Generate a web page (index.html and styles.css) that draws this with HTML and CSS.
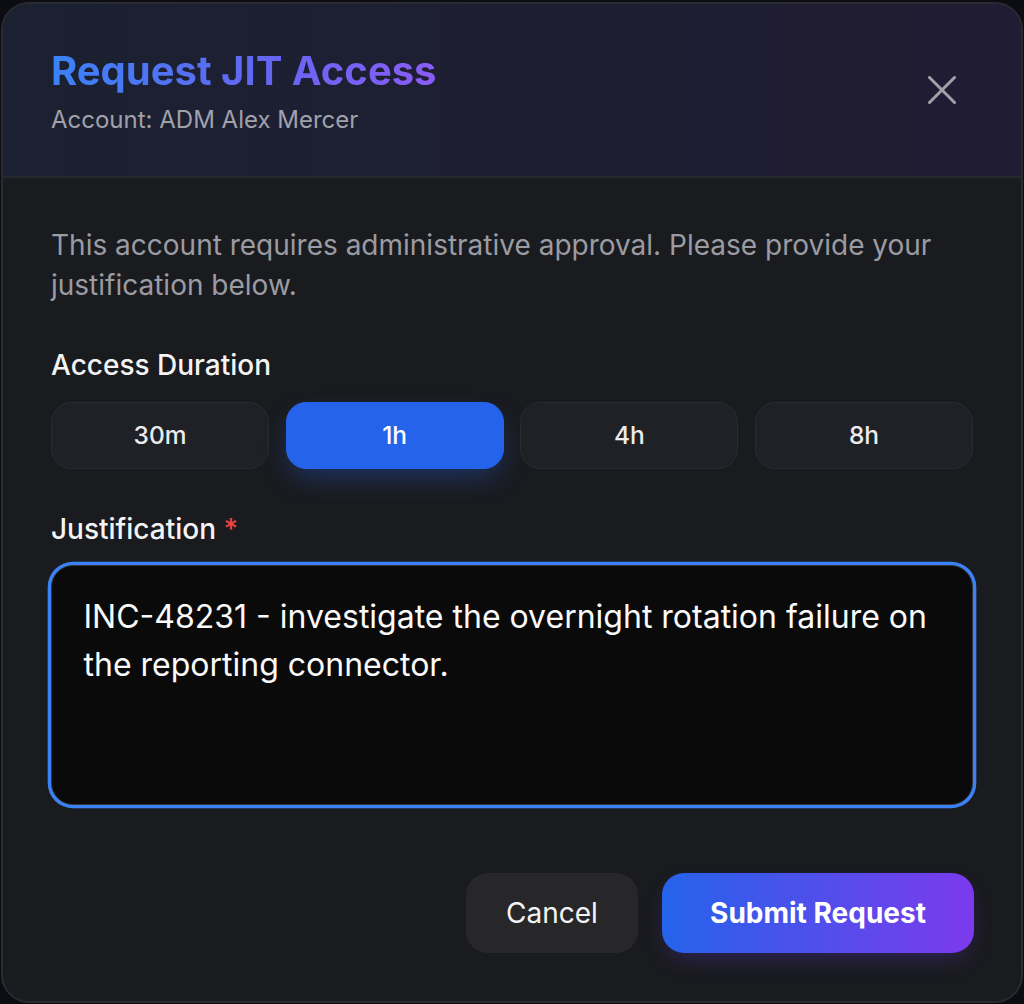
FILE: index.html
```html
<!DOCTYPE html>
<html lang="en">
<head>
<meta charset="utf-8">
<title>Request JIT Access</title>
<link rel="stylesheet" href="styles.css">
</head>
<body>
<div class="modal">
  <header class="modal-header">
    <div class="header-text">
      <h1 class="title">Request JIT Access</h1>
      <p class="subtitle">Account: ADM Alex Mercer</p>
    </div>
    <button class="close" aria-label="Close">
      <svg width="28" height="28" viewBox="0 0 28 28" fill="none" stroke="currentColor" stroke-width="3" stroke-linecap="round">
        <path d="M1.5 1.5 L26.5 26.5 M26.5 1.5 L1.5 26.5"/>
      </svg>
    </button>
  </header>
  <div class="modal-body">
    <p class="intro">This account requires administrative approval. Please provide your justification below.</p>
    <div class="label">Access Duration</div>
    <div class="durations">
      <button class="dur">30m</button>
      <button class="dur active">1h</button>
      <button class="dur">4h</button>
      <button class="dur">8h</button>
    </div>
    <div class="label label-just">Justification <span class="req">*</span></div>
    <textarea class="just">INC-48231 - investigate the overnight rotation failure on the reporting connector.</textarea>
    <div class="footer">
      <button class="btn cancel">Cancel</button>
      <button class="btn submit">Submit Request</button>
    </div>
  </div>
</div>
</body>
</html>
```
FILE: styles.css
```css
* { box-sizing: border-box; }
html, body { margin: 0; padding: 0; }
body {
  background: #0b0d12;
  font-family: Inter, "Noto Sans", sans-serif;
  width: 1024px;
  height: 1004px;
  padding: 2px 1px 1px 1px;
}
.modal {
  width: 1022px;
  height: 1001px;
  border: 2px solid #2a2b30;
  border-radius: 28px;
  background: #1a1b1f;
  overflow: hidden;
  display: flex;
  flex-direction: column;
}
.modal-header {
  display: flex;
  align-items: center;
  justify-content: space-between;
  padding: 40px 50px 40px 48px;
  background: linear-gradient(90deg, #1b2131 0%, #1e1e33 55%, #211c33 100%);
  border-bottom: 2px solid #27282d;
}
.title {
  margin: 0;
  font-size: 40px;
  line-height: 53px;
  font-weight: 700;
  display: inline-block;
  background: linear-gradient(90deg, #3b82f6 0%, #6366f1 55%, #8b5cf6 100%);
  -webkit-background-clip: text;
  background-clip: text;
  color: transparent;
}
.subtitle {
  margin: 6px 0 0;
  font-size: 24px;
  line-height: 33px;
  color: #a1a1aa;
}
.close {
  background: none;
  border: 0;
  padding: 0;
  margin-right: 15px;
  color: #a1a1aa;
  display: flex;
}
.modal-body {
  padding: 47px 48px 47px 48px;
  display: flex;
  flex-direction: column;
  flex: 1;
}
.intro {
  margin: 0 0 40px;
  font-size: 28px;
  line-height: 40px;
  color: #9b9ba3;
}
.label {
  font-size: 28px;
  line-height: 40px;
  font-weight: 500;
  color: #f4f4f5;
  margin-bottom: 16.7px;
}
.req { color: #ef4444; }
.durations {
  display: grid;
  grid-template-columns: repeat(4, 1fr);
  gap: 16.7px;
  margin-bottom: 40px;
}
.dur {
  height: 67px;
  border-radius: 20px;
  border: 1.67px solid #2a2b30;
  background: #202126;
  color: #ececee;
  font-family: inherit;
  font-size: 24.5px;
  font-weight: 500;
}
.dur.active {
  background: #2563eb;
  border-color: #2563eb;
  color: #ffffff;
  box-shadow: 0 12px 28px -6px rgba(37, 99, 235, 0.38);
}
.just {
  display: block;
  width: 100%;
  height: 240px;
  resize: none;
  background: #0a0a0a;
  border: 1.67px solid #333338;
  border-radius: 22px;
  box-shadow: 0 0 0 3.3px #3b82f6;
  padding: 26.7px 31.5px;
  font-family: inherit;
  font-size: 32px;
  line-height: 48px;
  color: #fafafa;
  outline: none;
}
.footer {
  margin-top: 68px;
  display: flex;
  justify-content: flex-end;
  gap: 24px;
}
.btn {
  height: 80px;
  border: 0;
  border-radius: 22px;
  font-family: inherit;
  font-size: 28px;
}
.cancel {
  width: 172px;
  background: #27272a;
  color: #f4f4f5;
  font-weight: 400;
}
.submit {
  width: 312px;
  margin-right: -1px;
  background: linear-gradient(90deg, #2563eb 0%, #7c3aed 100%);
  color: #ffffff;
  font-weight: 700;
  box-shadow: 0 10px 25px -8px rgba(99, 60, 230, 0.35);
}
```
